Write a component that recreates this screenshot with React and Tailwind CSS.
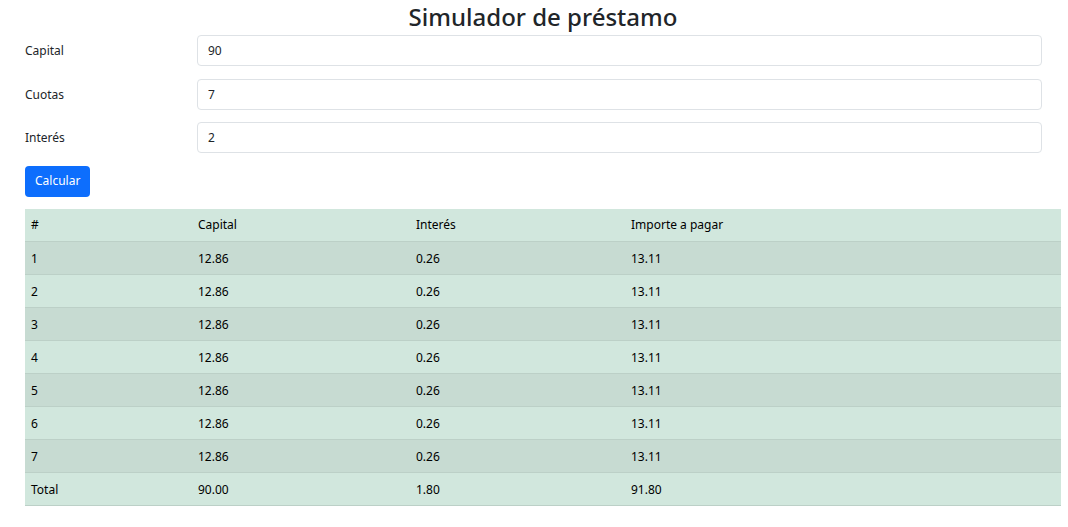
import React, { useState } from 'react';

const calcRows = (capital, cuotas, interes) => {
  const rows = [];
  const cap = capital / cuotas;
  const int = (cap * interes) / 100;
  for (let i = 1; i <= cuotas; i++) {
    rows.push({ n: i, capital: cap, interes: int, total: cap + int });
  }
  return rows;
};

const Field = ({ label, value, onChange }) => (
  <div className="flex items-center h-[31px] mb-[12.5px]">
    <label className="w-[172px] shrink-0 pt-[1px]">{label}</label>
    <input
      value={value}
      onChange={(e) => onChange(e.target.value)}
      className="flex-1 h-[31px] px-[10px] border border-[#dee2e6] rounded-[4px] bg-white text-[#212529] outline-none"
    />
  </div>
);

const App = () => {
  const [capital, setCapital] = useState('90');
  const [cuotas, setCuotas] = useState('7');
  const [interes, setInteres] = useState('2');

  const rows = calcRows(Number(capital), Number(cuotas), Number(interes));
  const totCap = rows.reduce((a, r) => a + r.capital, 0);
  const totInt = rows.reduce((a, r) => a + r.interes, 0);
  const tot = rows.reduce((a, r) => a + r.total, 0);

  return (
    <div className="min-h-screen bg-white text-[#212529] text-[12px]" style={{ fontFamily: '"Noto Sans", sans-serif' }}>
      <div className="pl-[25px] pr-[7px]">
        {/* Title */}
        <h1 className="text-center text-[24px] font-medium leading-[32px] pt-[1px] mb-[2px]">Simulador de préstamo</h1>

        {/* Form */}
        <div className="pr-[19px]">
          <Field label="Capital" value={capital} onChange={setCapital} />
          <Field label="Cuotas" value={cuotas} onChange={setCuotas} />
          <Field label="Interés" value={interes} onChange={setInteres} />
        </div>
        <button className="h-[31px] px-[10px] rounded-[4px] bg-[#0d6efd] text-white">Calcular</button>

        {/* Tabla */}
        <table className="w-full mt-[12px] border-collapse bg-[#d1e7dd] text-[#000]">
          <thead>
            <tr className="h-[33px] border-b border-[#bcd0c7]">
              <th className="w-[167px] px-[6px] pt-[1px] text-left font-normal">#</th>
              <th className="w-[218px] px-[6px] pt-[1px] text-left font-normal">Capital</th>
              <th className="w-[215px] px-[6px] pt-[1px] text-left font-normal">Interés</th>
              <th className="px-[6px] pt-[1px] text-left font-normal">Importe a pagar</th>
            </tr>
          </thead>
          <tbody>
            {rows.map((r, i) => (
              <tr key={r.n} className={`h-[33px] border-b border-[#bcd0c7] ${i % 2 === 0 ? 'bg-[#c7dbd2]' : ''}`}>
                <td className="px-[6px] pt-[1px]">{r.n}</td>
                <td className="px-[6px] pt-[1px]">{r.capital.toFixed(2)}</td>
                <td className="px-[6px] pt-[1px]">{r.interes.toFixed(2)}</td>
                <td className="px-[6px] pt-[1px]">{r.total.toFixed(2)}</td>
              </tr>
            ))}
            <tr className="h-[33px] border-b border-[#bcd0c7]">
              <td className="px-[6px] pt-[1px]">Total</td>
              <td className="px-[6px] pt-[1px]">{totCap.toFixed(2)}</td>
              <td className="px-[6px] pt-[1px]">{totInt.toFixed(2)}</td>
              <td className="px-[6px] pt-[1px]">{tot.toFixed(2)}</td>
            </tr>
          </tbody>
        </table>
      </div>
    </div>
  );
};

export default App;
